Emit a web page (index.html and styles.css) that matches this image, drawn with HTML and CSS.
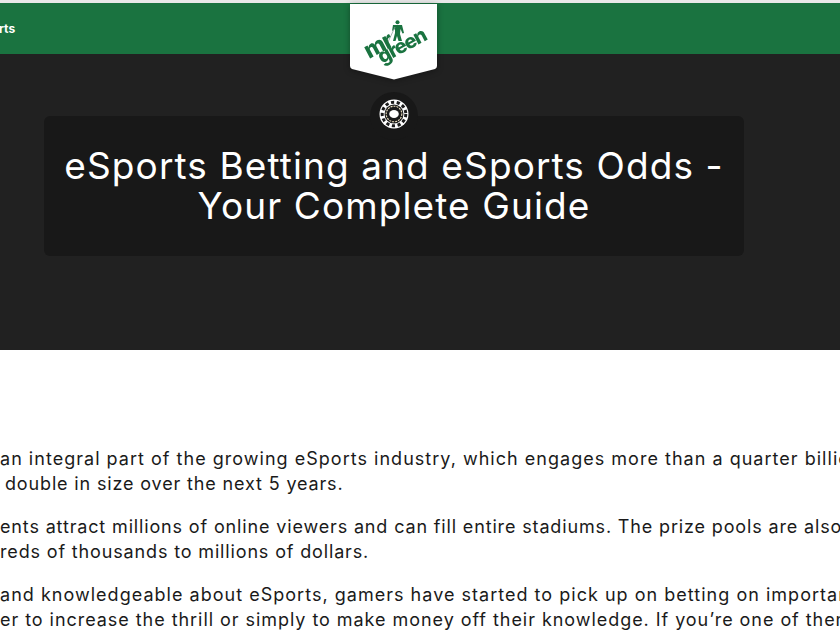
FILE: index.html
```html
<!DOCTYPE html>
<html lang="en">
<head>
<meta charset="utf-8">
<title>eSports Betting and eSports Odds</title>
<link rel="stylesheet" href="styles.css">
</head>
<body>
<div class="page">
  <header class="topbar">
    <a class="nav-link">rts</a>
    <div class="logo-tab">
      <svg class="logo" viewBox="0 0 87 76" width="87" height="76">
        <path class="tab-shape" d="M0 0H87V62Q87 64 85 65L44 75.500 2 65Q0 64 0 62Z"/>
        <g class="logo-mark">
          <circle cx="47.500" cy="18.200" r="2"/>
          <path d="M43 21L52 21 54 29 52.500 29.500 50.500 25 50 30 52 37 48.500 37 47 32 45.500 37 43 37 45 29 45 25 42 27Z"/>
          <path class="club" d="M45 23L38 38"/>
          <text class="logo-word" x="19" y="55" transform="rotate(-28 19 55)">mr</text>
          <text class="logo-word green" x="32" y="60" transform="rotate(-28 32 60)">green</text>
        </g>
      </svg>
    </div>
  </header>
  <section class="hero">
    <div class="chip-wrap">
      <svg viewBox="0 0 30 30" width="30" height="30">
        <circle cx="15" cy="15" r="14.500" fill="#fff"/>
        <circle cx="15" cy="15" r="11.800" fill="none" stroke="#1a1a1a" stroke-width="3" stroke-dasharray="3.200 2.600"/>
        <circle cx="15" cy="15" r="9.500" fill="#1a1a1a"/>
        <circle cx="15" cy="15" r="7.800" fill="none" stroke="#f3e6c4" stroke-width="1.100" stroke-dasharray="2 1"/>
        <ellipse cx="15" cy="15" rx="4.800" ry="4" fill="#fff"/>
      </svg>
    </div>
    <div class="title-box">
      <h1>eSports Betting and eSports Odds -<br>Your Complete Guide</h1>
    </div>
  </section>
  <main class="article">
    <p><span class="w1">an integral part of the growing eSports industry, which engages more than a quarter billion</span><br><span class="in">double in size over the next 5 years.</span></p>
    <p>ents attract millions of online viewers and can fill entire stadiums. The prize pools are also<br>reds of thousands to millions of dollars.</p>
    <p><span class="w1">and knowledgeable about eSports, gamers have started to pick up on betting on important</span><br><span class="w2">er to increase the thrill or simply to make money off their knowledge. If you’re one of them</span></p>
  </main>
</div>
</body>
</html>
```
FILE: styles.css
```css
* { box-sizing: border-box; }
html, body { margin: 0; height: 100%; overflow: hidden; background: #fff; }
body { font-family: Inter, "Noto Sans", sans-serif; }
.page { width: 840px; height: 630px; overflow: hidden; }
.topbar {
  height: 54px;
  border-top: 3px solid #e9e9e9;
  background: #1a7340;
  display: flex;
  align-items: center;
  position: relative;
}
.nav-link { color: #fff; font-size: 12px; font-weight: 700; margin-left: -1px; }
.logo-tab { position: absolute; left: 350px; top: 1px; z-index: 2; filter: drop-shadow(0 1px 3px rgba(0,0,0,.35)); }
.logo { display: block; }
.tab-shape { fill: #fff; }
.logo-mark { fill: #1a7340; }
.club { fill: none; stroke: #8fa3a0; stroke-width: .8; }
.logo-word { font-family: Inter, sans-serif; font-weight: 800; font-size: 23px; letter-spacing: -1.2px; }
.green { font-size: 20px; letter-spacing: -1.1px; }
.hero {
  height: 296px;
  background: #212121;
  position: relative;
  padding: 62px 96px 0 44px;
}
.chip-wrap {
  position: absolute;
  left: 370px;
  top: 38px;
  width: 48px;
  height: 48px;
  padding-bottom: 4px;
  border-radius: 50%;
  background: #181818;
  display: flex;
  align-items: center;
  justify-content: center;
  z-index: 1;
}
.title-box {
  width: 700px;
  height: 140px;
  background: #181818;
  border-radius: 6px;
  padding-top: 30px;
  position: relative;
}
h1 {
  margin: 0;
  color: #fff;
  font-size: 37px;
  line-height: 40px;
  font-weight: 400;
  letter-spacing: 1.1px;
  text-align: center;
}
.article { padding-top: 96px; }
p {
  margin: 0 0 18px;
  color: #1a1a1a;
  font-size: 18px;
  line-height: 25px;
  letter-spacing: .85px;
  white-space: nowrap;
}
.in { margin-left: 5px; }
.w1 { letter-spacing: 1.02px; }
.w2 { letter-spacing: .95px; }
```
